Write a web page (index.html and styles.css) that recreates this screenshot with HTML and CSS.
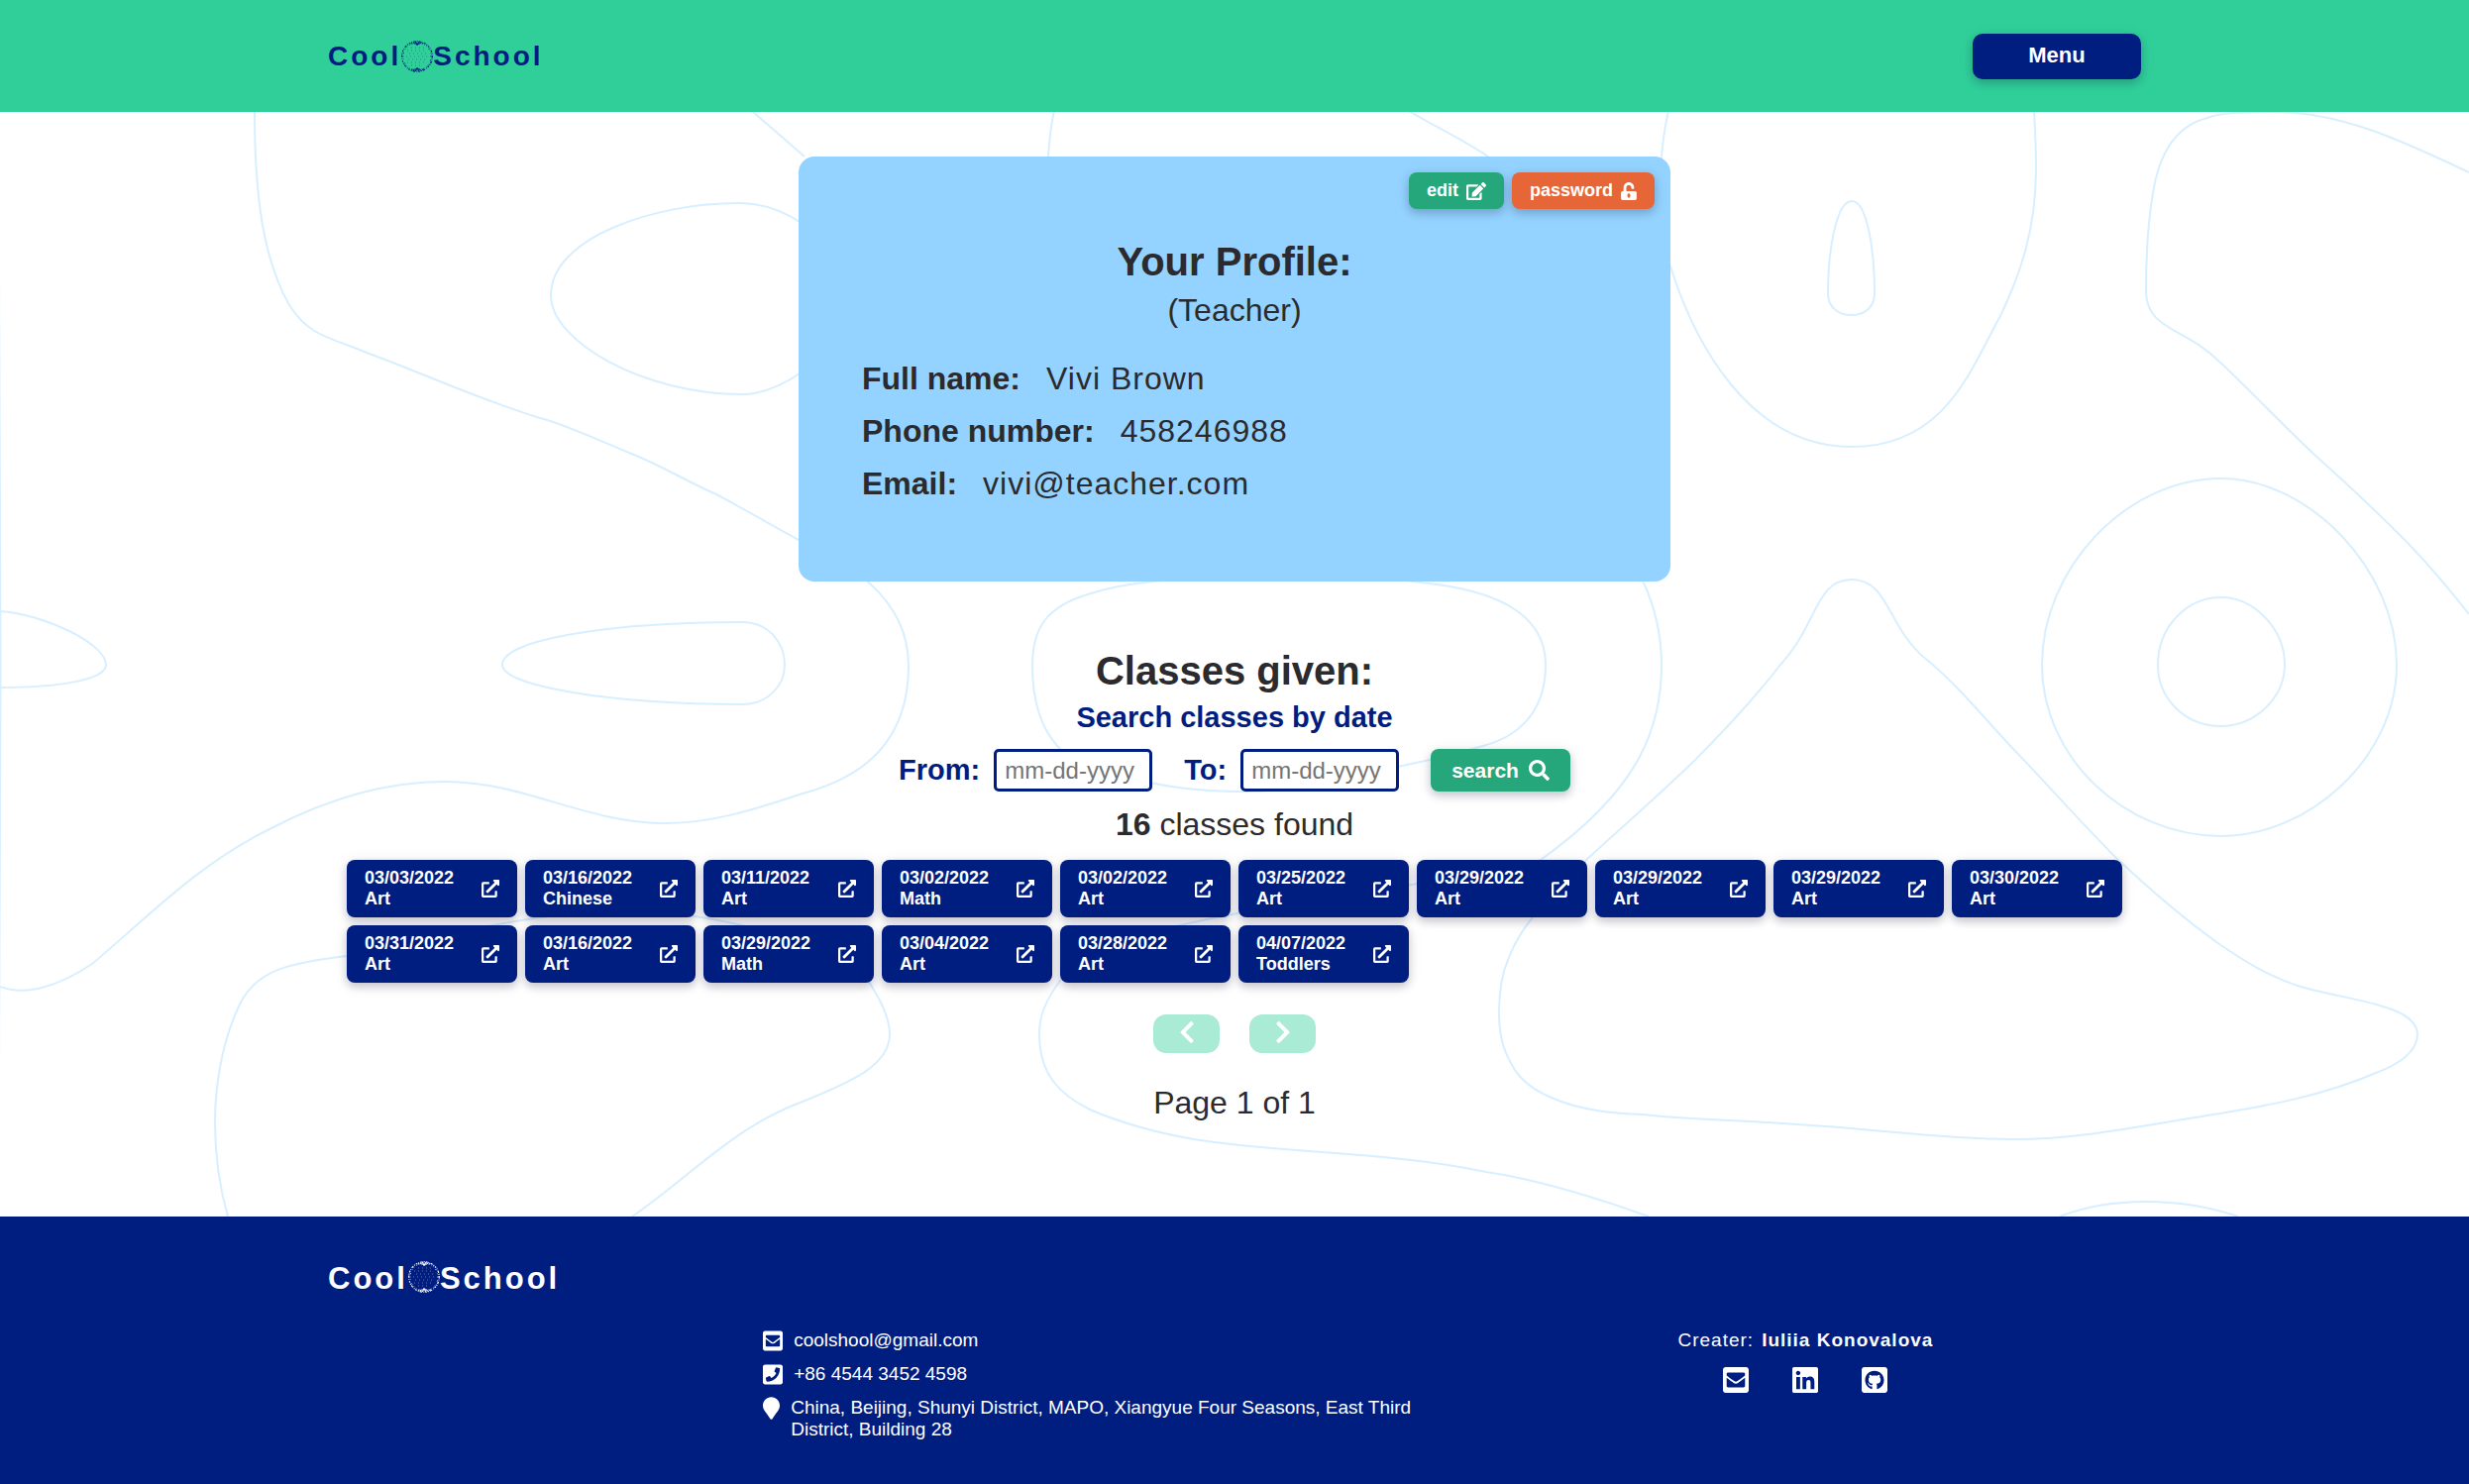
FILE: index.html
```html
<!DOCTYPE html>
<html lang="en">
<head>
<meta charset="utf-8">
<meta name="viewport" content="width=device-width, initial-scale=1">
<title>Cool School – Your Profile</title>
<link rel="stylesheet" href="styles.css">
</head>
<body>
<svg class="sprite" aria-hidden="true">
  <symbol id="i-open" viewBox="0 0 512 512"><path d="M432,320H400a16,16,0,0,0-16,16V448H64V128H208a16,16,0,0,0,16-16V80a16,16,0,0,0-16-16H48A48,48,0,0,0,0,112V464a48,48,0,0,0,48,48H400a48,48,0,0,0,48-48V336A16,16,0,0,0,432,320ZM488,0h-128c-21.37,0-32.05,25.91-17,41l35.73,35.73L135,320.37a24,24,0,0,0,0,34L157.67,377a24,24,0,0,0,34,0L435.28,133.32,471,169c15,15,41,4.5,41-17V24A24,24,0,0,0,488,0Z"/></symbol>
  <symbol id="i-edit" viewBox="0 0 576 512"><path d="M402.6 83.2l90.2 90.2c3.8 3.8 3.8 10 0 13.8L274.4 405.6l-92.8 10.3c-12.4 1.4-22.9-9.1-21.5-21.5l10.3-92.8L388.8 83.2c3.8-3.8 10-3.8 13.8 0zm162-22.9l-48.8-48.8c-15.2-15.2-39.9-15.2-55.2 0l-35.4 35.4c-3.8 3.8-3.8 10 0 13.8l90.2 90.2c3.8 3.8 10 3.8 13.8 0l35.4-35.4c15.2-15.3 15.2-40 0-55.2zM384 346.2V448H64V128h229.8c3.2 0 6.2-1.3 8.5-3.5l40-40c7.6-7.6 2.2-20.5-8.5-20.5H48C21.5 64 0 85.5 0 112v352c0 26.5 21.5 48 48 48h352c26.5 0 48-21.5 48-48V306.2c0-10.7-12.9-16-20.5-8.5l-40 40c-2.2 2.3-3.5 5.3-3.5 8.5z"/></symbol>
  <symbol id="i-unlock" viewBox="0 0 448 512"><path d="M400 256H152V152.9c0-39.6 31.7-72.5 71.3-72.9 40-.4 72.7 32.1 72.7 72v16c0 13.3 10.7 24 24 24h32c13.3 0 24-10.7 24-24v-16C376 68 307.5-.3 223.5 0 139.5.3 72 69.5 72 153.5V256H48c-26.5 0-48 21.5-48 48v160c0 26.5 21.5 48 48 48h352c26.5 0 48-21.5 48-48V304c0-26.5-21.5-48-48-48zM264 408c0 22.1-17.9 40-40 40s-40-17.9-40-40v-48c0-22.1 17.9-40 40-40s40 17.9 40 40v48z"/></symbol>
  <symbol id="i-search" viewBox="0 0 512 512"><path d="M505 442.7L405.3 343c-4.5-4.5-10.6-7-17-7H372c27.6-35.3 44-79.7 44-128C416 93.1 322.9 0 208 0S0 93.1 0 208s93.1 208 208 208c48.3 0 92.7-16.4 128-44v16.3c0 6.4 2.5 12.5 7 17l99.7 99.7c9.4 9.4 24.6 9.4 33.9 0l28.3-28.3c9.4-9.4 9.4-24.6.1-34zM208 336c-70.7 0-128-57.2-128-128 0-70.7 57.2-128 128-128 70.7 0 128 57.2 128 128 0 70.7-57.2 128-128 128z"/></symbol>
  <symbol id="i-mail" viewBox="0 0 448 512"><path d="M400 32H48C21.49 32 0 53.49 0 80v352c0 26.51 21.49 48 48 48h352c26.51 0 48-21.49 48-48V80c0-26.51-21.49-48-48-48zM178.117 262.104C87.429 196.287 88.353 196.121 64 177.167V152c0-13.255 10.745-24 24-24h272c13.255 0 24 10.745 24 24v25.167c-24.371 18.969-23.434 19.124-114.117 84.938-10.5 7.655-31.392 26.12-45.883 25.894-14.503.218-35.367-18.227-45.883-25.895zM384 217.775V360c0 13.255-10.745 24-24 24H88c-13.255 0-24-10.745-24-24V217.775c13.958 10.794 33.329 25.236 95.303 70.214 14.162 10.341 37.975 32.145 64.694 32.01 26.887.134 51.036-22.041 64.72-32.025 61.958-44.964 81.325-59.406 95.283-70.199z"/></symbol>
  <symbol id="i-phone" viewBox="0 0 448 512"><path d="M400 32H48C21.49 32 0 53.49 0 80v352c0 26.51 21.49 48 48 48h352c26.51 0 48-21.49 48-48V80c0-26.51-21.49-48-48-48zM94 416c-7.033 0-13.057-4.873-14.616-11.627l-14.998-65a15 15 0 0 1 8.707-17.16l69.998-29.999a15 15 0 0 1 17.518 4.289l30.997 37.885c48.944-22.963 88.297-62.858 110.781-110.78l-37.886-30.997a15.001 15.001 0 0 1-4.289-17.518l30-69.998a15 15 0 0 1 17.16-8.707l65 14.998A14.997 14.997 0 0 1 384 126c0 160.292-129.945 290-290 290z"/></symbol>
  <symbol id="i-pin" viewBox="0 0 384 512"><path d="M172.268 501.67C26.97 291.031 0 269.413 0 192 0 85.961 85.961 0 192 0s192 85.961 192 192c0 77.413-26.97 99.031-172.268 309.67-9.535 13.774-29.93 13.773-39.464 0z"/></symbol>
  <symbol id="i-linkedin" viewBox="0 0 448 512"><path d="M416 32H31.9C14.3 32 0 46.5 0 64.3v383.4C0 465.5 14.3 480 31.9 480H416c17.6 0 32-14.5 32-32.3V64.3c0-17.8-14.4-32.3-32-32.3zM135.4 416H69V202.2h66.5V416zm-33.2-243c-21.3 0-38.5-17.3-38.5-38.5S80.9 96 102.2 96c21.2 0 38.5 17.3 38.5 38.5 0 21.3-17.2 38.5-38.5 38.5zm282.1 243h-66.4V312c0-24.8-.5-56.7-34.5-56.7-34.6 0-39.9 27-39.9 54.9V416h-66.4V202.2h63.7v29.2h.9c8.900-16.800 30.600-34.500 62.900-34.500 67.200 0 79.700 44.300 79.700 101.900V416z"/></symbol>
  <symbol id="i-github" viewBox="0 0 448 512"><path d="M400 32H48C21.5 32 0 53.5 0 80v352c0 26.5 21.5 48 48 48h352c26.5 0 48-21.5 48-48V80c0-26.5-21.5-48-48-48zM277.3 415.7c-8.4 1.5-11.5-3.7-11.5-8 0-5.4.2-33 .2-55.3 0-15.6-5.2-25.5-11.3-30.7 37-4.1 76-9.2 76-73.1 0-18.2-6.5-27.3-17.1-39 1.7-4.3 7.4-22-1.7-45-13.9-4.3-45.7 17.9-45.7 17.9-13.2-3.7-27.5-5.6-41.6-5.6-14.1 0-28.4 1.9-41.6 5.6 0 0-31.8-22.2-45.7-17.9-9.1 22.9-3.5 40.6-1.7 45-10.6 11.7-15.6 20.8-15.6 39 0 63.6 37.3 69 74.3 73.1-4.8 4.3-9.1 11.7-10.6 22.3-9.5 4.3-33.8 11.7-48.3-13.9-9.1-15.8-25.5-17.1-25.5-17.1-16.2-.2-1.1 10.2-1.1 10.2 10.8 5 18.4 24.2 18.4 24.2 9.7 29.7 56.1 19.7 56.1 19.7 0 13.9.2 36.5.2 40.6 0 4.3-3 9.5-11.5 8-66-22.1-112.2-84.9-112.2-158.3 0-91.8 70.2-161.5 162-161.5S388 165.6 388 257.4c.1 73.4-44.7 136.3-110.7 158.3z"/></symbol>
  <symbol id="i-left" viewBox="0 0 320 512"><path d="M34.52 239.03L228.87 44.69c9.37-9.37 24.57-9.37 33.94 0l22.67 22.67c9.36 9.36 9.37 24.52.04 33.9L131.49 256l154.02 154.75c9.34 9.38 9.32 24.54-.04 33.9l-22.67 22.67c-9.37 9.37-24.57 9.37-33.94 0L34.52 272.97c-9.37-9.37-9.37-24.57 0-33.94z"/></symbol>
  <symbol id="i-right" viewBox="0 0 320 512"><path d="M285.48 239.03L91.13 44.69c-9.37-9.37-24.57-9.37-33.94 0L34.52 67.36c-9.36 9.36-9.37 24.52-.04 33.9L188.51 256 34.49 410.75c-9.34 9.38-9.32 24.54.04 33.9l22.67 22.67c9.37 9.37 24.57 9.37 33.94 0l194.34-194.35c9.37-9.37 9.37-24.57 0-33.94z"/></symbol>
  <!-- Dandelion-like globe of small specks used in the logo -->
  <symbol id="i-globe" viewBox="0 0 32 32">
    <g fill="none" stroke="currentColor">
      <circle cx="16" cy="16" r="15.3" stroke-width="1.2" stroke-dasharray="1.6 1.1 .7 1.5 2.4 1 1 1.2"/>
      <circle cx="16" cy="16" r="14" stroke-width=".9" stroke-dasharray=".8 2.6 1.2 3.7 .6 1.9"/>
      <path stroke-width="1.1" d="M12 1.5l1.6 1.8M14.5 1l.6 3M16 2.5V5M17.5 1.2l-.5 3M20 1.5l-1.8 2M10 2.6l1.4.6M22 2.6l-1.4.6M12 30.5l1.6-1.8M14.5 31l.6-3M16 29.5V27M17.5 30.8l-.5-3M20 30.5l-1.8-2M10 29.4l1.4-.6M22 29.4l-1.4-.6"/>
      <path stroke-width=".8" stroke-opacity=".6" stroke-dasharray=".8 3.2" d="M6 10h20M8 13h18M5 16h22M7 19h19M6 22h20M10 7h13M10 25h12"/>
    </g>
  </symbol>
</svg>

<header class="header">
  <div class="wrap header-row">
    <a class="logo" href="#">Cool<svg class="globe" aria-hidden="true"><use href="#i-globe"/></svg>School</a>
    <button class="btn menu" type="button">Menu</button>
  </div>
</header>

<main class="main">
  <svg class="waves" viewBox="0 113 2492 1115" preserveAspectRatio="xMidYMid slice" aria-hidden="true">
    <path d="M257 112C257 200 266 262 292 308C312 340 335 341 370 356C430 378 480 402 545 422C575 430 605 445 635 457C670 471 695 487 723 499C755 516 780 531 806 545C850 565 917 600 917 672C917 750 870 785 810 801C765 816 720 831 672 831C590 831 530 789 449 789C380 789 320 812 274 836C200 872 150 925 93 973C60 995 26 1006 0 996"/>
    <path d="M810 226C790 212 770 205 746 205C660 205 556 240 556 298C556 345 650 398 749 398C770 398 790 389 810 375"/>
    <path d="M749 628C775 628 792 648 792 671C792 692 775 711 749 711C620 711 507 693 507 671C507 645 620 628 749 628Z"/>
    <path d="M0 617C45 620 107 650 107 671C107 688 50 694 0 694"/>
    <path d="M-1 260C1 500 1 850 -1 1090"/>
    <path d="M759 112L812 158"/>
    <path d="M230 1228C222 1200 217 1165 217 1133C217 1085 228 1040 245 1008C262 980 290 972 350 965C430 955 500 924 615 920C680 918 740 930 790 945C840 962 870 975 880 996C892 1015 898 1030 898 1044C898 1075 860 1092 810 1112C740 1138 700 1185 638 1228"/>
    <path d="M1069 755C1050 735 1042 705 1042 672C1042 635 1055 612 1101 599C1140 587 1180 584 1246 584C1320 584 1390 582 1426 587C1480 592 1560 606 1560 671C1560 725 1525 745 1500 752C1460 764 1440 768 1415 773C1350 790 1300 799 1257 799C1220 799 1190 796 1166 791C1120 783 1085 775 1069 755Z"/>
    <path d="M1658 586C1670 612 1677 640 1677 671C1677 740 1650 800 1555 868C1440 900 1100 925 1072 987C1055 1010 1049 1025 1049 1044C1049 1085 1070 1105 1100 1120C1130 1133 1165 1143 1205 1150C1300 1165 1400 1162 1500 1183C1560 1192 1620 1212 1664 1228"/>
    <path d="M1797 671C1835 630 1832 585 1869 585C1905 585 1905 630 1940 662C1975 690 2000 722 2031 755C2065 790 2100 830 2136 866C2170 898 2205 928 2240 953C2265 970 2290 986 2322 996C2350 1004 2380 1008 2405 1016C2428 1022 2440 1033 2440 1044C2440 1062 2420 1075 2398 1083C2345 1106 2290 1116 2228 1126C2165 1136 2100 1150 2031 1150C1960 1150 1895 1140 1829 1136C1770 1131 1710 1131 1658 1125C1625 1124 1595 1119 1576 1112C1550 1103 1533 1090 1525 1073C1516 1058 1513 1042 1513 1023C1513 1003 1515 985 1522 969C1528 953 1537 938 1547 926C1565 905 1583 885 1601 868C1637 835 1674 803 1709 769C1740 738 1770 706 1797 671Z"/>
    <path d="M1684 112C1680 130 1678 145 1677 158C1672 200 1675 235 1686 269C1710 345 1765 451 1869 451C1965 451 1990 370 2019 319C2040 275 2055 230 2055 170C2055 145 2054 130 2053 112"/>
    <path d="M1869 203C1885 203 1892 255 1892 296C1892 310 1882 318 1869 318C1855 318 1845 310 1845 296C1845 255 1853 203 1869 203Z"/>
    <path d="M2492 174C2430 145 2365 113 2297 113C2262 113 2240 114 2228 119C2200 126 2180 150 2173 195C2167 230 2166 260 2166 294C2166 333 2205 330 2240 365C2262 385 2300 425 2335 458C2365 485 2390 508 2417 535C2445 562 2470 592 2492 620"/>
    <path d="M2242 483C2330 483 2419 575 2419 671C2419 765 2330 844 2242 844C2145 844 2061 765 2061 671C2061 575 2145 483 2242 483Z"/>
    <path d="M2242 603C2275 603 2306 635 2306 671C2306 705 2275 733 2242 733C2205 733 2178 705 2178 671C2178 635 2205 603 2242 603Z"/>
    <path d="M2079 1228C2130 1208 2200 1208 2259 1228"/>
    <path d="M1064 112C1060 128 1059 145 1058 158M1422 112C1445 126 1475 140 1502 158"/>
  </svg>

  <section class="profile">
    <div class="profile-actions">
      <button class="btn small green" type="button">edit <svg class="icon-edit" aria-hidden="true"><use href="#i-edit"/></svg></button>
      <button class="btn small orange" type="button">password <svg class="icon-lock" aria-hidden="true"><use href="#i-unlock"/></svg></button>
    </div>
    <h1 class="title">Your Profile:</h1>
    <p class="role">(Teacher)</p>
    <dl class="details">
      <div class="detail"><dt>Full name:</dt><dd>Vivi Brown</dd></div>
      <div class="detail"><dt>Phone number:</dt><dd>458246988</dd></div>
      <div class="detail"><dt>Email:</dt><dd>vivi@teacher.com</dd></div>
    </dl>
  </section>

  <section class="wrap classes">
    <h2 class="title">Classes given:</h2>
    <h3 class="subtitle">Search classes by date</h3>
    <form class="search">
      <div class="field"><label for="from">From:</label><input id="from" type="text" placeholder="mm-dd-yyyy"></div>
      <div class="field"><label for="to">To:</label><input id="to" type="text" placeholder="mm-dd-yyyy"></div>
      <button class="btn find green" type="button">search <svg class="icon-search" aria-hidden="true"><use href="#i-search"/></svg></button>
    </form>
    <p class="count"><strong>16</strong> classes found</p>
    <div class="grid">
      <a class="btn class" href="#"><span>03/03/2022<br>Art</span><svg class="icon-open" aria-hidden="true"><use href="#i-open"/></svg></a>
      <a class="btn class" href="#"><span>03/16/2022<br>Chinese</span><svg class="icon-open" aria-hidden="true"><use href="#i-open"/></svg></a>
      <a class="btn class" href="#"><span>03/11/2022<br>Art</span><svg class="icon-open" aria-hidden="true"><use href="#i-open"/></svg></a>
      <a class="btn class" href="#"><span>03/02/2022<br>Math</span><svg class="icon-open" aria-hidden="true"><use href="#i-open"/></svg></a>
      <a class="btn class" href="#"><span>03/02/2022<br>Art</span><svg class="icon-open" aria-hidden="true"><use href="#i-open"/></svg></a>
      <a class="btn class" href="#"><span>03/25/2022<br>Art</span><svg class="icon-open" aria-hidden="true"><use href="#i-open"/></svg></a>
      <a class="btn class" href="#"><span>03/29/2022<br>Art</span><svg class="icon-open" aria-hidden="true"><use href="#i-open"/></svg></a>
      <a class="btn class" href="#"><span>03/29/2022<br>Art</span><svg class="icon-open" aria-hidden="true"><use href="#i-open"/></svg></a>
      <a class="btn class" href="#"><span>03/29/2022<br>Art</span><svg class="icon-open" aria-hidden="true"><use href="#i-open"/></svg></a>
      <a class="btn class" href="#"><span>03/30/2022<br>Art</span><svg class="icon-open" aria-hidden="true"><use href="#i-open"/></svg></a>
      <a class="btn class" href="#"><span>03/31/2022<br>Art</span><svg class="icon-open" aria-hidden="true"><use href="#i-open"/></svg></a>
      <a class="btn class" href="#"><span>03/16/2022<br>Art</span><svg class="icon-open" aria-hidden="true"><use href="#i-open"/></svg></a>
      <a class="btn class" href="#"><span>03/29/2022<br>Math</span><svg class="icon-open" aria-hidden="true"><use href="#i-open"/></svg></a>
      <a class="btn class" href="#"><span>03/04/2022<br>Art</span><svg class="icon-open" aria-hidden="true"><use href="#i-open"/></svg></a>
      <a class="btn class" href="#"><span>03/28/2022<br>Art</span><svg class="icon-open" aria-hidden="true"><use href="#i-open"/></svg></a>
      <a class="btn class" href="#"><span>04/07/2022<br>Toddlers</span><svg class="icon-open" aria-hidden="true"><use href="#i-open"/></svg></a>
    </div>
    <nav class="pager" aria-label="Pages">
      <button type="button" disabled aria-label="Previous page"><svg class="icon-chevron" aria-hidden="true"><use href="#i-left"/></svg></button>
      <button type="button" disabled aria-label="Next page"><svg class="icon-chevron" aria-hidden="true"><use href="#i-right"/></svg></button>
    </nav>
    <p class="page">Page 1 of 1</p>
  </section>
</main>

<footer class="footer">
  <div class="wrap">
    <a class="logo logo-footer" href="#">Cool<svg class="globe" aria-hidden="true"><use href="#i-globe"/></svg>School</a>
    <div class="footer-columns">
      <address class="contacts">
        <div class="contact"><svg class="icon-square" aria-hidden="true"><use href="#i-mail"/></svg><a href="mailto:coolshool@gmail.com">coolshool@gmail.com</a></div>
        <div class="contact"><svg class="icon-square" aria-hidden="true"><use href="#i-phone"/></svg><a href="tel:+86454434524598">+86 4544 3452 4598</a></div>
        <div class="contact"><svg class="icon-pin" aria-hidden="true"><use href="#i-pin"/></svg><span>China, Beijing, Shunyi District, MAPO, Xiangyue Four Seasons, East Third District, Building 28</span></div>
      </address>
      <div class="creator">
        <p class="creator-name">Creater: <strong>Iuliia Konovalova</strong></p>
        <div class="social">
          <a href="#" aria-label="Email"><svg aria-hidden="true"><use href="#i-mail"/></svg></a>
          <a href="#" aria-label="LinkedIn"><svg aria-hidden="true"><use href="#i-linkedin"/></svg></a>
          <a href="#" aria-label="GitHub"><svg aria-hidden="true"><use href="#i-github"/></svg></a>
        </div>
      </div>
    </div>
  </div>
</footer>
</body>
</html>
```
FILE: styles.css
```css
:root {
  --navy: #001d80;
  --mint: #30cf9a;
  --green: #26a77b;
  --orange: #e66638;
  --sky: #94d3ff;
  --ink: #2b2b2f;
}

* {
  box-sizing: border-box;
  margin: 0;
  padding: 0;
}

body {
  display: flex;
  flex-direction: column;
  min-height: 100vh;
  background: #fff;
  color: var(--ink);
  font-family: "Liberation Sans", Arial, sans-serif;
  font-size: 19px;
  line-height: 22px;
}

a {
  color: inherit;
  text-decoration: none;
}

svg {
  display: block;
  flex: none;
  fill: currentColor;
}

.sprite {
  position: absolute;
  width: 0;
  height: 0;
}

.wrap {
  width: 92%;
  max-width: 1830px;
  margin: 0 auto;
}

/* Buttons */
.btn {
  display: inline-flex;
  align-items: center;
  justify-content: center;
  border: 0;
  border-radius: 8px;
  background: var(--navy);
  box-shadow: 0 4px 8px rgba(20, 10, 50, 0.2), 0 2px 16px rgba(20, 10, 50, 0.08);
  color: #fff;
  font-family: inherit;
  font-weight: 700;
  cursor: pointer;
}

.green { background: var(--green); }
.orange { background: var(--orange); }

.menu {
  width: 170px;
  height: 46px;
  border-radius: 10px;
  padding-bottom: 2px;
  font-size: 22px;
}

.small {
  gap: 8px;
  height: 37px;
  padding: 0 18px;
  font-size: 18px;
}

.find {
  gap: 10px;
  height: 43px;
  padding: 0 21px;
  font-size: 21px;
}

.icon-edit { width: 20px; height: 18px; }
.icon-lock { width: 16px; height: 18px; }
.icon-search { width: 21px; height: 21px; }
.icon-open { width: 18px; height: 18px; }
.icon-chevron { width: 16px; height: 26px; }

/* Header */
.header {
  background: var(--mint);
}

.header-row {
  display: flex;
  align-items: center;
  justify-content: space-between;
  height: 113px;
}

.logo {
  display: flex;
  align-items: flex-start;
  width: fit-content;
  color: var(--navy);
  font-size: 28px;
  font-weight: 700;
  line-height: 32px;
  letter-spacing: 3px;
}

.globe {
  width: 32px;
  height: 32px;
}

/* Main */
.main {
  position: relative;
  flex: 1;
  padding: 45px 0 96px;
}

.waves {
  position: absolute;
  inset: 0;
  z-index: -1;
  width: 100%;
  height: 100%;
  fill: none;
  stroke: #d8efff;
  stroke-width: 2;
}

.title {
  font-size: 40px;
  line-height: 46px;
  text-align: center;
}

.profile {
  width: 92%;
  max-width: 880px;
  margin: 0 auto;
  padding: 16px 16px 80px;
  border-radius: 16px;
  background: var(--sky);
  font-size: 32px;
  line-height: 37px;
}

.profile-actions {
  display: flex;
  justify-content: flex-end;
  gap: 8px;
  margin-bottom: 30px;
}

.role {
  margin-top: 8px;
  text-align: center;
}

.details {
  display: flex;
  flex-direction: column;
  gap: 16px;
  margin-top: 32px;
  padding: 0 48px;
}

.detail {
  display: flex;
  flex-wrap: wrap;
  gap: 26px;
}

.detail dt {
  font-weight: 700;
}

.detail dd {
  letter-spacing: 1px;
}

.classes {
  padding-top: 67px;
  font-size: 32px;
  line-height: 37px;
  text-align: center;
}

.subtitle {
  margin-top: 8px;
  color: var(--navy);
  font-size: 29px;
  line-height: 33px;
}

.search {
  display: flex;
  flex-wrap: wrap;
  align-items: center;
  justify-content: center;
  gap: 16px 32px;
  margin: 15px 0;
}

.field {
  display: flex;
  align-items: center;
  gap: 14px;
}

.field label {
  color: var(--navy);
  font-size: 29px;
  font-weight: 700;
  line-height: 33px;
}

.field input {
  width: 160px;
  height: 43px;
  padding: 0 8px;
  border: 3px solid var(--navy);
  border-radius: 5px;
  background: #fff;
  color: var(--ink);
  font-family: inherit;
  font-size: 24px;
}

.field input::placeholder {
  color: #757575;
}

.grid {
  display: grid;
  grid-template-columns: repeat(auto-fill, minmax(172px, 1fr));
  gap: 8px;
  margin-top: 17px;
  padding: 0 19px;
}

.class {
  justify-content: space-between;
  padding: 8px 18px;
  font-size: 18px;
  line-height: 21px;
  text-align: left;
}

.pager {
  display: flex;
  justify-content: center;
  gap: 30px;
  margin: 32px 0;
}

.pager button {
  display: flex;
  align-items: center;
  justify-content: center;
  width: 67px;
  height: 39px;
  padding-bottom: 3px;
  border: 0;
  border-radius: 13px;
  background: #a9ebd5;
  color: #fff;
}

/* Footer */
.footer {
  padding: 45px 0 44px;
  background: var(--navy);
  color: #fff;
}

.logo-footer {
  color: #fff;
  font-size: 31px;
  line-height: 35px;
}

.footer-columns {
  display: grid;
  grid-template-columns: 24fr 39fr 37fr;
  margin-top: 34px;
}

.contacts {
  display: flex;
  grid-column: 2;
  flex-direction: column;
  gap: 11px;
  font-style: normal;
}

.contact {
  display: flex;
  gap: 11px;
}

.icon-square { width: 20px; height: 23px; }
.icon-pin { width: 17px; height: 23px; }

.creator {
  display: flex;
  flex-direction: column;
  align-items: center;
  gap: 14px;
  letter-spacing: 1px;
}

.creator-name {
  display: flex;
  flex-wrap: wrap;
  gap: 8px;
}

.social {
  display: flex;
  gap: 44px;
}

.social svg {
  width: 26px;
  height: 30px;
}
```
